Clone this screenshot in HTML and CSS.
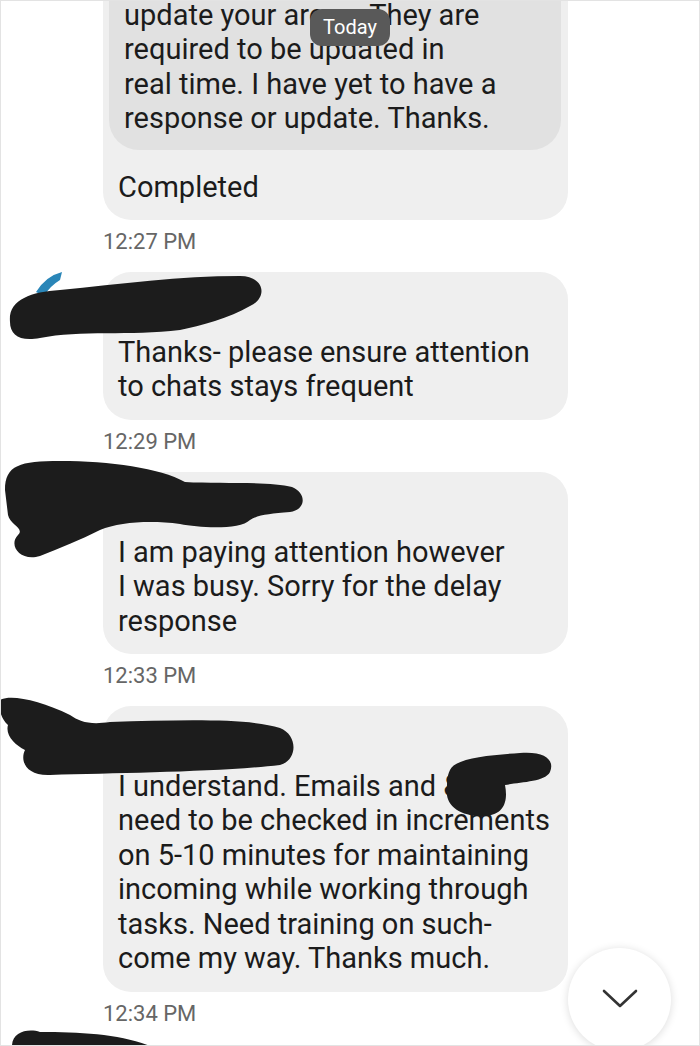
FILE: index.html
```html
<!DOCTYPE html>
<html lang="en">
<head>
    <meta charset="UTF-8">
    <meta name="viewport" content="width=device-width, initial-scale=1.0">
    <title>Chat</title>
    <link rel="stylesheet" href="styles.css">
</head>
<body>

    <div class="screen">
        <div class="thread">

            <!-- reply with quoted message -->
            <div class="bubble first">
                <div class="quote">
                    update your areas. They are<br>
                    required to be updated in<br>
                    real time. I have yet to have a<br>
                    response or update. Thanks.
                </div>
                <div class="reply">Completed</div>
            </div>
            <div class="time">12:27 PM</div>

            <div class="bubble incoming">
                Thanks- please ensure attention<br>
                to chats stays frequent
            </div>
            <div class="time">12:29 PM</div>

            <div class="bubble incoming">
                I am paying attention however<br>
                I was busy. Sorry for the delay<br>
                response
            </div>
            <div class="time">12:33 PM</div>

            <div class="bubble incoming">
                I understand. Emails and &amp;<br>
                need to be checked in increments<br>
                on 5-10 minutes for maintaining<br>
                incoming while working through<br>
                tasks. Need training on such-<br>
                come my way. Thanks much.
            </div>
            <div class="time">12:34 PM</div>
        </div>

        <!-- date chip -->
        <div class="date-chip">Today</div>

        <!-- redaction marks drawn over the names -->
        <svg class="redact" width="700" height="1046" viewBox="0 0 700 1046">
            <path d="M36 292 Q46 276 62 272 L60 280 Q50 286 44 296 Z" fill="#2a86b8"/>
            <g fill="#1c1c1c">
                <path d="M10 322 C8 300 30 292 60 290 C120 284 180 276 240 276 C265 276 268 298 250 306 C230 318 200 326 180 330 C130 336 80 330 40 338 C20 342 10 335 10 322 Z"/>
                <path d="M5 490 C5 465 20 461 60 461 C110 461 160 468 185 482 C220 484 270 481 292 487 C308 494 305 510 290 512 C270 514 260 514 250 520 C240 530 200 528 180 524 C150 520 120 522 100 530 C80 540 60 548 40 556 C20 562 8 545 18 535 C25 528 10 525 8 515 Z"/>
                <path d="M0 700 C10 694 40 700 70 715 C80 722 90 725 110 722 C180 720 250 718 280 728 C298 735 298 760 280 765 C220 772 120 773 50 775 C25 776 20 760 25 750 C15 745 5 735 8 725 C0 718 -2 705 0 700 Z"/>
                <path d="M450 770 C455 758 490 755 520 753 C545 751 555 760 550 772 C545 782 520 782 505 785 C508 800 505 815 485 816 C460 817 445 805 447 790 C447 782 447 776 450 770 Z"/>
                <path d="M12 1046 C12 1032 28 1028 40 1032 C80 1032 120 1034 150 1046 Z"/>
            </g>
        </svg>

        <!-- scroll to bottom -->
        <div class="scroll-btn">
            <svg width="36" height="20" viewBox="0 0 36 20">
                <path d="M2 2 L18 17 L34 2" stroke="#333" stroke-width="2.6" fill="none" stroke-linecap="round" stroke-linejoin="round"/>
            </svg>
        </div>
    </div>

</body>
</html>
```

FILE: styles.css
```css
body { margin: 0; background: #fff; font-family: Roboto, "Noto Sans", sans-serif; }
.screen {
    position: relative; width: 700px; height: 1046px; overflow: hidden;
    border: 1px solid #e3e3e3; box-sizing: border-box; background: #fff;
}
.thread { padding-left: 102px; }
.bubble {
    width: 465px; box-sizing: border-box; background: #efefef; border-radius: 28px;
    font-size: 29px; line-height: 34.4px; color: #1b1b1b;
}
.bubble.first { margin-top: -41px; padding: 6px 7px 16px 6px; }
.quote {
    background: #e1e1e1; border-radius: 30px;
    padding: 32px 10px 14px 15px;
}
.reply { margin-top: 20px; padding-left: 9px; }
.incoming { padding: 63px 10px 16px 15px; }
.time {
    margin: 10px 0 18px 0; font-size: 22px; line-height: 24px; color: #666;
}
.date-chip {
    position: absolute; left: 309px; top: 8px; width: 80px; height: 37px;
    background: #595959; color: #fff; border-radius: 12px;
    font-size: 20px; line-height: 37px; text-align: center;
}
.redact { position: absolute; left: -1px; top: -1px; }
.scroll-btn {
    position: absolute; left: 567px; top: 947px; width: 103px; height: 103px;
    border-radius: 50%; background: #fff;
    box-shadow: 0 1px 8px rgba(0, 0, 0, 0.14);
    display: flex; align-items: center; justify-content: center;
}
.scroll-btn svg { margin-top: -2px; }
```
